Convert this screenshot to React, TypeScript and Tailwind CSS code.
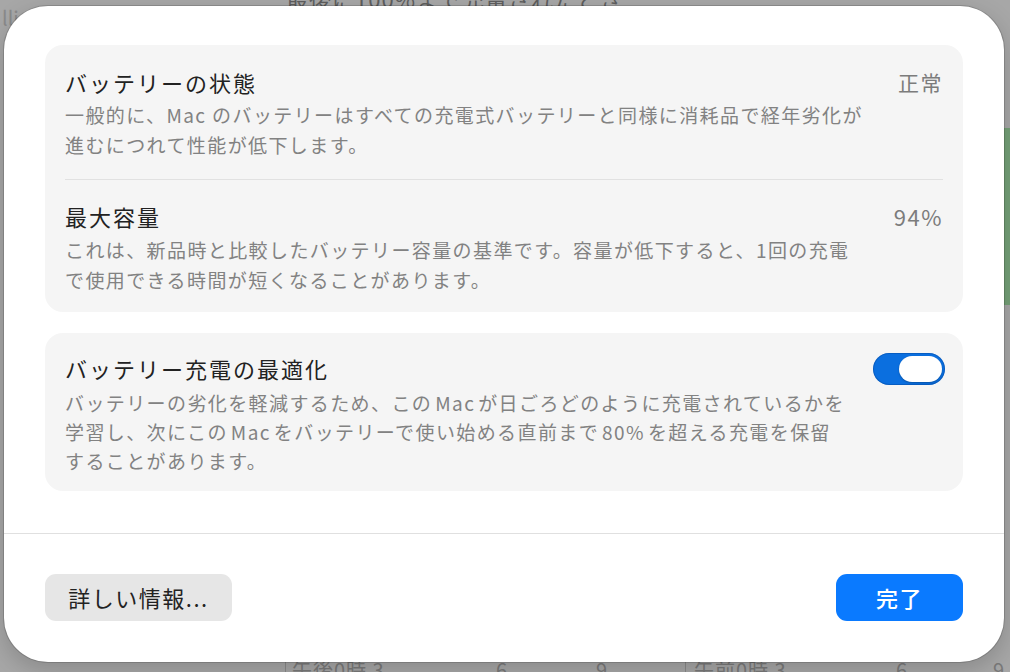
import React from "react";

const font = { fontFamily: '"Noto Sans CJK JP", "Noto Sans", sans-serif' };

function Toggle() {
  return (
    <div className="w-[72px] h-[32px] rounded-full bg-[#0b6fdf] p-[3px] flex justify-end shrink-0 shadow-[inset_0_0_0_1px_rgba(0,60,140,0.35)]">
      <div className="w-[43px] h-[26px] rounded-full bg-white shadow-[0_1px_2px_rgba(0,0,0,0.25)]" />
    </div>
  );
}

function Latin({ children }: { children: React.ReactNode }) {
  return <span className="mx-[3px]">{children}</span>;
}

export default function App() {
  return (
    <div
      className="relative w-[1010px] h-[672px] overflow-hidden bg-[#a7a7a7]"
      style={font}
    >
      {/* background window content (dimmed) */}
      <div className="absolute left-[286px] top-[-14px] text-[22px] tracking-[1px] text-[#5e5e5e] leading-[24px]">
        最後に100%まで充電されたとき
      </div>
      <div className="absolute left-[2px] top-[8px] text-[20px] text-[#8a8a8a] leading-[20px]">
        lli
      </div>
      <div className="absolute right-0 top-[128px] w-[6px] h-[177px] bg-[#75a077]" />
      <div className="absolute left-[285px] top-[660px] w-[1px] h-[12px] bg-[#8a8a8a]" />
      <div className="absolute left-[685px] top-[660px] w-[1px] h-[12px] bg-[#8a8a8a]" />
      <div className="absolute left-[292px] top-[660px] text-[20px] leading-[20px] text-[#7a7a7a] tracking-[1px]">
        午後0時 3
      </div>
      <div className="absolute left-[496px] top-[660px] text-[20px] leading-[20px] text-[#7a7a7a]">6</div>
      <div className="absolute left-[596px] top-[660px] text-[20px] leading-[20px] text-[#7a7a7a]">9</div>
      <div className="absolute left-[694px] top-[660px] text-[20px] leading-[20px] text-[#7a7a7a] tracking-[1px]">
        午前0時 3
      </div>
      <div className="absolute left-[896px] top-[660px] text-[20px] leading-[20px] text-[#7a7a7a]">6</div>
      <div className="absolute left-[993px] top-[660px] text-[20px] leading-[20px] text-[#7a7a7a]">9</div>

      {/* dialog sheet */}
      <div className="relative ml-[4px] mt-[6px] w-[1000px] h-[656px] bg-white rounded-[44px] shadow-[0_0_0_1px_rgba(0,0,0,0.15),0_8px_24px_rgba(0,0,0,0.18)] flex flex-col">
        <div className="px-[41px] pt-[39px] flex flex-col gap-[21px]">
          {/* card 1 */}
          <div className="rounded-[18px] bg-[#f5f5f5] pt-[22px] pb-[17px] px-[20px]">
            <div className="flex items-start justify-between">
              <div>
                <div className="text-[22px] leading-[30px] tracking-[2px] text-[#222222]">
                  バッテリーの状態
                </div>
                <div className="mt-[3px] text-[19px] leading-[30px] tracking-[1.4px] text-[#828282] whitespace-nowrap">
                  一般的に、Mac のバッテリーはすべての充電式バッテリーと同様に消耗品で経年劣化が
                  <br />
                  進むにつれて性能が低下します。
                </div>
              </div>
              <div className="text-[21px] leading-[30px] tracking-[1.5px] text-[#7c7c7c]">正常</div>
            </div>
            <div className="mt-[19px] h-[1px] bg-[#e1e1e1]" />
            <div className="mt-[21px] flex items-start justify-between">
              <div>
                <div className="text-[22px] leading-[30px] tracking-[2px] text-[#222222]">
                  最大容量
                </div>
                <div className="mt-[4px] text-[19px] leading-[30px] tracking-[1.4px] text-[#828282] whitespace-nowrap">
                  これは、新品時と比較したバッテリー容量の基準です。容量が低下すると、1回の充電
                  <br />
                  で使用できる時間が短くなることがあります。
                </div>
              </div>
              <div className="text-[22px] leading-[30px] tracking-[1.5px] text-[#7c7c7c]">94%</div>
            </div>
          </div>

          {/* card 2 */}
          <div className="rounded-[18px] bg-[#f5f5f5] pt-[20px] pb-[16px] pl-[20px] pr-[18px] flex items-start justify-between">
            <div>
              <div className="text-[22px] leading-[30px] tracking-[2px] text-[#222222]">
                バッテリー充電の最適化
              </div>
              <div className="mt-[5px] text-[19px] leading-[29px] tracking-[1.4px] text-[#828282] whitespace-nowrap">
                バッテリーの劣化を軽減するため、この<Latin>Mac</Latin>が日ごろどのように充電されているかを
                <br />
                学習し、次にこの<Latin>Mac</Latin>をバッテリーで使い始める直前まで<Latin>80%</Latin>を超える充電を保留
                <br />
                することがあります。
              </div>
            </div>
            <Toggle />
          </div>
        </div>

        <div className="mt-[42px] h-[1px] bg-[#e0e0e0]" />

        <div className="px-[41px] pt-[40px] flex items-center justify-between">
          <button className="h-[47px] w-[187px] rounded-[11px] bg-[#e6e6e6] text-[22px] tracking-[1.5px] text-[#222222] flex items-center justify-center">
            詳しい情報...
          </button>
          <button className="h-[47px] w-[127px] rounded-[11px] bg-[#0a7aff] text-[22px] tracking-[1.5px] font-medium text-white flex items-center justify-center">
            完了
          </button>
        </div>
      </div>
    </div>
  );
}
